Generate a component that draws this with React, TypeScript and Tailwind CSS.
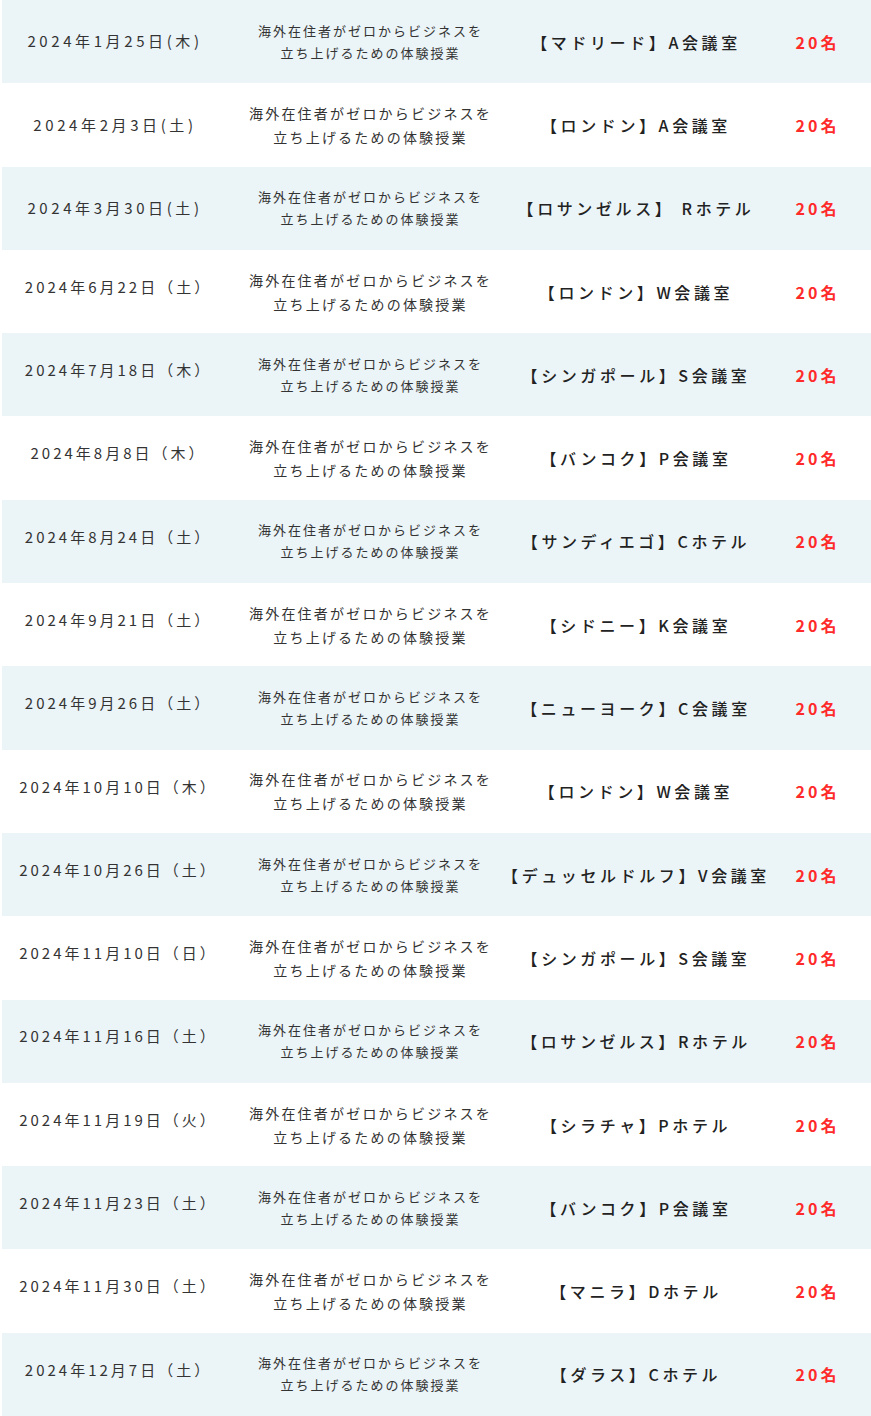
const rows = [
  { date: "2024年1月25日(木)", venue: "【マドリード】A会議室" },
  { date: "2024年2月3日(土)", venue: "【ロンドン】A会議室" },
  { date: "2024年3月30日(土)", venue: "【ロサンゼルス】 Rホテル" },
  { date: "2024年6月22日（土）", venue: "【ロンドン】W会議室" },
  { date: "2024年7月18日（木）", venue: "【シンガポール】S会議室" },
  { date: "2024年8月8日（木）", venue: "【バンコク】P会議室" },
  { date: "2024年8月24日（土）", venue: "【サンディエゴ】Cホテル" },
  { date: "2024年9月21日（土）", venue: "【シドニー】K会議室" },
  { date: "2024年9月26日（土）", venue: "【ニューヨーク】C会議室" },
  { date: "2024年10月10日（木）", venue: "【ロンドン】W会議室" },
  { date: "2024年10月26日（土）", venue: "【デュッセルドルフ】V会議室" },
  { date: "2024年11月10日（日）", venue: "【シンガポール】S会議室" },
  { date: "2024年11月16日（土）", venue: "【ロサンゼルス】Rホテル" },
  { date: "2024年11月19日（火）", venue: "【シラチャ】Pホテル" },
  { date: "2024年11月23日（土）", venue: "【バンコク】P会議室" },
  { date: "2024年11月30日（土）", venue: "【マニラ】Dホテル" },
  { date: "2024年12月7日（土）", venue: "【ダラス】Cホテル" },
];

export default function App() {
  return (
    <div
      className="w-[871px] bg-white text-[#333]"
      style={{ fontFamily: '"Noto Sans CJK JP", "Noto Sans", sans-serif' }}
    >
      {rows.map((row, i) => {
        const shaded = i % 2 === 0;
        const wide = row.date.includes("（");
        return (
          <div
            key={i}
            className={`ml-[2px] flex h-[83.3px] items-center ${shaded ? "bg-[#ebf4f7]" : "bg-white"}`}
          >
            <div
              className={`w-[222px] whitespace-nowrap text-center text-[15px] ${
                wide ? "pl-[11px] pb-[9px] tracking-[3px]" : "pl-[4px] tracking-[3.6px]"
              }`}
            >
              {row.date}
            </div>
            <div
              className={`w-[291px] text-center ${
                shaded
                  ? "pl-[2px] text-[13px] leading-[22px] tracking-[2px]"
                  : "pl-[2px] text-[14px] leading-[24px] tracking-[2.2px]"
              }`}
            >
              海外在住者がゼロからビジネスを
              <br />
              立ち上げるための体験授業
            </div>
            <div className="flex w-[250px] justify-center pr-[8px] text-[16px] font-medium tracking-[3.6px] text-[#222]">
              <span className="whitespace-nowrap">{row.venue}</span>
            </div>
            <div className="w-[102px] pl-[3px] text-center text-[16px] font-bold tracking-[3px] text-[#ff2b2b]">
              20名
            </div>
          </div>
        );
      })}
    </div>
  );
}
